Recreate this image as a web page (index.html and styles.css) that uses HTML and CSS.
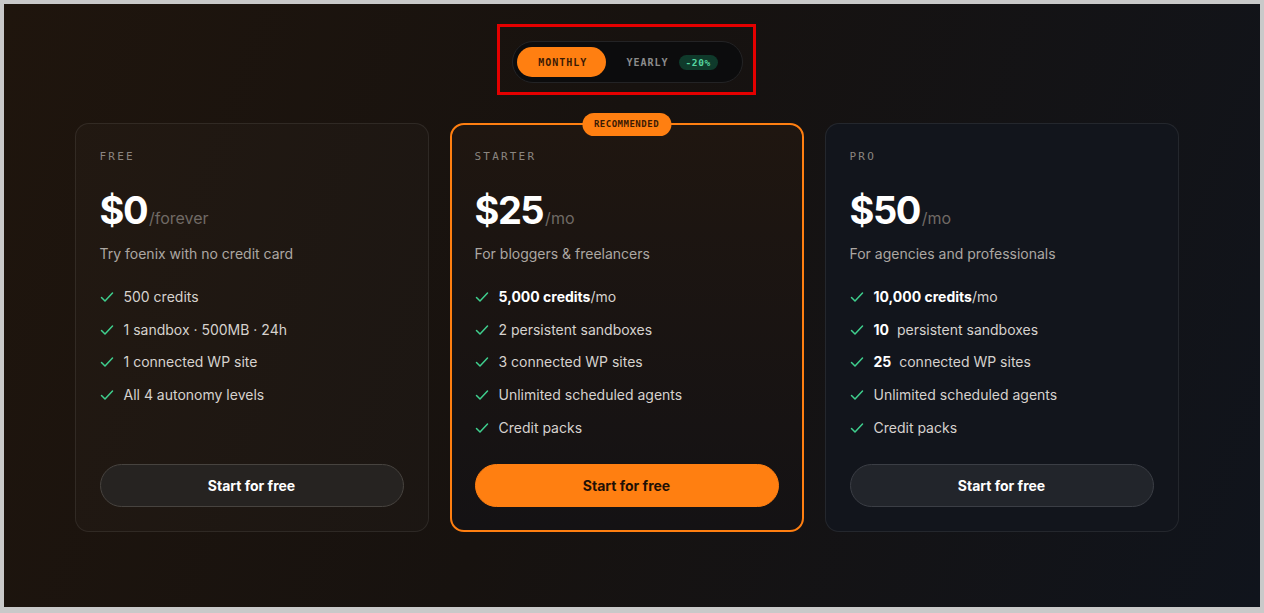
FILE: index.html
```html
<!DOCTYPE html>
<html lang="en">
<head>
<title>Pricing</title>
<meta charset="utf-8">
<meta name="viewport" content="width=device-width, initial-scale=1">
<link rel="stylesheet" href="styles.css">
</head>
<body>

<main class="page">
  <div class="billing-frame">
    <div class="billing-toggle">
      <button class="toggle-btn active" type="button">MONTHLY</button>
      <button class="toggle-btn" type="button">YEARLY <span class="discount">-20%</span></button>
    </div>
  </div>

  <section class="plans">
    <article class="plan">
      <h3 class="plan-name">FREE</h3>
      <div class="plan-price"><span class="amount">$0</span><span class="period">/forever</span></div>
      <p class="plan-desc">Try foenix with no credit card</p>
      <ul class="features">
        <li><svg viewBox="0 0 14 14"><path d="M1.5 7.5 5 11 12.5 3"/></svg>500 credits</li>
        <li><svg viewBox="0 0 14 14"><path d="M1.5 7.5 5 11 12.5 3"/></svg>1 sandbox · 500MB · 24h</li>
        <li><svg viewBox="0 0 14 14"><path d="M1.5 7.5 5 11 12.5 3"/></svg>1 connected WP site</li>
        <li><svg viewBox="0 0 14 14"><path d="M1.5 7.5 5 11 12.5 3"/></svg>All 4 autonomy levels</li>
      </ul>
      <button class="plan-btn" type="button">Start for free</button>
    </article>

    <article class="plan plan-featured">
      <span class="ribbon">RECOMMENDED</span>
      <h3 class="plan-name">STARTER</h3>
      <div class="plan-price"><span class="amount">$25</span><span class="period">/mo</span></div>
      <p class="plan-desc">For bloggers &amp; freelancers</p>
      <ul class="features">
        <li><svg viewBox="0 0 14 14"><path d="M1.5 7.5 5 11 12.5 3"/></svg><span><b>5,000 credits</b>/mo</span></li>
        <li><svg viewBox="0 0 14 14"><path d="M1.5 7.5 5 11 12.5 3"/></svg>2 persistent sandboxes</li>
        <li><svg viewBox="0 0 14 14"><path d="M1.5 7.5 5 11 12.5 3"/></svg>3 connected WP sites</li>
        <li><svg viewBox="0 0 14 14"><path d="M1.5 7.5 5 11 12.5 3"/></svg>Unlimited scheduled agents</li>
        <li><svg viewBox="0 0 14 14"><path d="M1.5 7.5 5 11 12.5 3"/></svg>Credit packs</li>
      </ul>
      <button class="plan-btn" type="button">Start for free</button>
    </article>

    <article class="plan plan-pro">
      <h3 class="plan-name">PRO</h3>
      <div class="plan-price"><span class="amount">$50</span><span class="period">/mo</span></div>
      <p class="plan-desc">For agencies and professionals</p>
      <ul class="features">
        <li><svg viewBox="0 0 14 14"><path d="M1.5 7.5 5 11 12.5 3"/></svg><span><b>10,000 credits</b>/mo</span></li>
        <li><svg viewBox="0 0 14 14"><path d="M1.5 7.5 5 11 12.5 3"/></svg><span><b class="num">10</b> persistent sandboxes</span></li>
        <li><svg viewBox="0 0 14 14"><path d="M1.5 7.5 5 11 12.5 3"/></svg><span><b class="num">25</b> connected WP sites</span></li>
        <li><svg viewBox="0 0 14 14"><path d="M1.5 7.5 5 11 12.5 3"/></svg>Unlimited scheduled agents</li>
        <li><svg viewBox="0 0 14 14"><path d="M1.5 7.5 5 11 12.5 3"/></svg>Credit packs</li>
      </ul>
      <button class="plan-btn" type="button">Start for free</button>
    </article>
  </section>
</main>

</body>
</html>
```

FILE: styles.css
```css
* {
  box-sizing: border-box;
}

body {
  margin: 0;
  background: #c9c9c9;
  font-family: Inter, "Noto Sans", Arial, sans-serif;
}

/* Page area inside the grey frame */
.page {
  margin: 4px 4px 0;
  height: 603px;
  padding: 20px 11px 0 0;
  display: flex;
  flex-direction: column;
  align-items: center;
  background: linear-gradient(110deg, #1f150d 0%, #17120f 45%, #10141c 100%);
}

/* Billing toggle */
.billing-frame {
  border: 3px solid #e40000;
  padding: 14px 10px 9px 12px;
}

.billing-toggle {
  display: flex;
  padding: 5px 4px;
  border: 1px solid #232325;
  border-radius: 999px;
  background: #0c0c0d;
}

.toggle-btn {
  display: flex;
  align-items: center;
  gap: 10px;
  height: 30px;
  padding: 0 20px;
  border: none;
  border-radius: 999px;
  background: transparent;
  color: #8c8c8c;
  font-family: "DejaVu Sans Mono", "Liberation Mono", monospace;
  font-size: 10px;
  font-weight: 700;
  letter-spacing: 1px;
}

.toggle-btn.active {
  padding: 0 19px 0 21px;
  background: #ff7f11;
  color: #3b1a04;
}

.discount {
  padding: 2px 7px;
  border-radius: 999px;
  background: #0f3a2b;
  color: #56d6a0;
  font-size: 9.5px;
  letter-spacing: 0.6px;
}

/* Plan cards */
.plans {
  display: grid;
  grid-template-columns: repeat(3, 354px);
  gap: 21px;
  margin-top: 28px;
}

.plan {
  position: relative;
  display: flex;
  flex-direction: column;
  padding: 25px 24px 24px;
  border: 1px solid rgba(255, 255, 255, 0.08);
  border-radius: 14px;
  background: rgba(255, 255, 255, 0.018);
}

.plan-featured {
  padding: 24px 23px 23px;
  border: 2px solid #ff7f11;
  background: linear-gradient(180deg, #1f1610 0%, #141214 100%);
}

.plan-pro {
  background: #12151c;
}

.ribbon {
  position: absolute;
  top: -12px;
  left: 50%;
  transform: translateX(-50%);
  padding: 0 12px;
  height: 23px;
  line-height: 23px;
  border-radius: 999px;
  background: #ff7f11;
  color: #3b1a04;
  font-family: "DejaVu Sans Mono", "Liberation Mono", monospace;
  font-size: 9px;
  font-weight: 700;
  letter-spacing: 0.5px;
}

.plan-name {
  margin: 0;
  line-height: 16px;
  color: #8b8580;
  font-family: "DejaVu Sans Mono", "Liberation Mono", monospace;
  font-size: 11px;
  font-weight: 400;
  letter-spacing: 2.2px;
}

.plan-price {
  display: flex;
  align-items: baseline;
  height: 38px;
  margin-top: 26px;
}

.amount {
  line-height: 38px;
  color: #fff;
  font-size: 38px;
  font-weight: 700;
  letter-spacing: -1.5px;
}

.period {
  margin-left: 2px;
  line-height: 16px;
  color: #706a65;
  font-size: 16px;
}

.plan-desc {
  margin: 15px 0 0;
  line-height: 20px;
  color: #aca7a2;
  font-size: 14px;
}

.features {
  display: flex;
  flex-direction: column;
  gap: 12.7px;
  margin: 23px 0 26px;
  padding: 0;
  list-style: none;
}

.features li {
  display: flex;
  align-items: center;
  gap: 10px;
  line-height: 20px;
  color: #d6d2ce;
  font-size: 14px;
}

.features svg {
  flex: none;
  width: 14px;
  height: 14px;
  fill: none;
  stroke: #3fcf8e;
  stroke-width: 1.5;
  stroke-linecap: round;
  stroke-linejoin: round;
}

.features b {
  color: #fff;
  font-weight: 700;
}

.features b.num {
  margin-right: 4px;
}

.plan-btn {
  margin-top: auto;
  height: 43px;
  border: 1px solid #47433f;
  border-radius: 999px;
  background: #262321;
  color: #fff;
  font-family: Inter, "Noto Sans", Arial, sans-serif;
  font-size: 14px;
  font-weight: 700;
}

.plan-featured .plan-btn {
  border-color: #ff7f11;
  background: #ff7f11;
  color: #1f1005;
}

.plan-pro .plan-btn {
  border-color: #3b3e45;
  background: #22252b;
}
```
